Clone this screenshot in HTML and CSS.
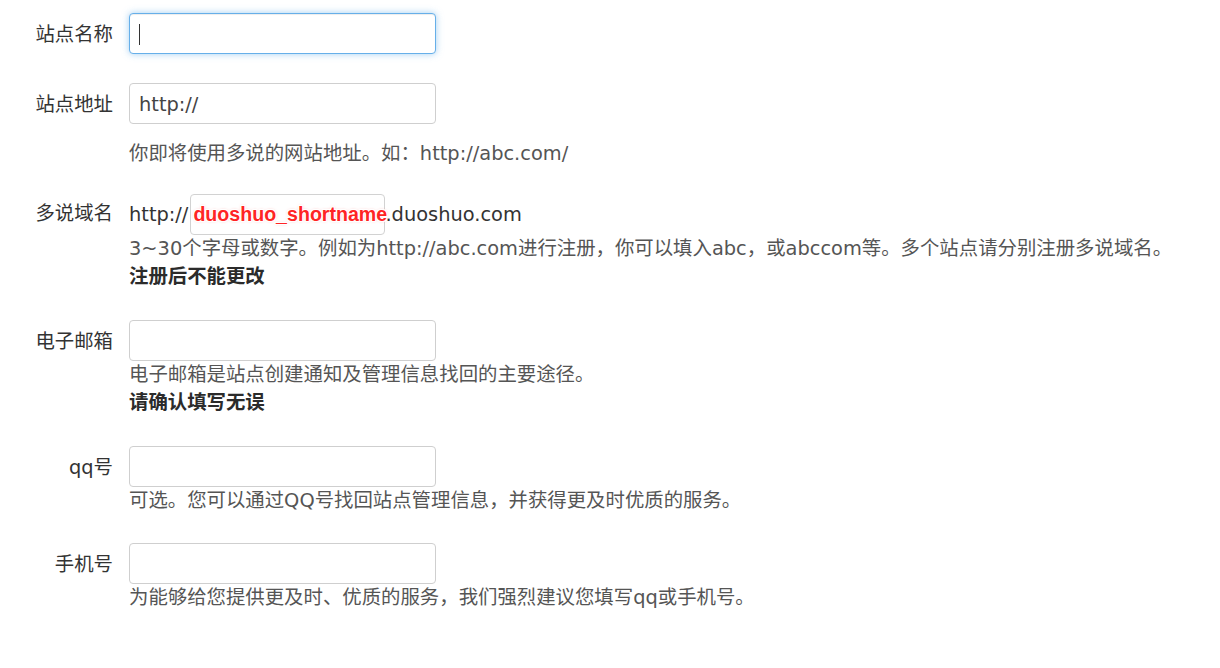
FILE: index.html
```html
<!DOCTYPE html>
<html lang="zh-CN">
<head>
<meta charset="utf-8">
<title>创建站点</title>
<link rel="stylesheet" href="styles.css">
</head>
<body>
<form class="form">
  <div class="group">
    <label class="label">站点名称</label>
    <div class="field">
      <div class="input focus"><span class="caret"></span></div>
    </div>
  </div>

  <div class="group group-url">
    <label class="label">站点地址</label>
    <div class="field">
      <div class="input">http://</div>
      <p class="help help-spaced">你即将使用多说的网站地址。如：http://abc.com/</p>
    </div>
  </div>

  <div class="group">
    <label class="label label-domain">多说域名</label>
    <div class="field">
      <div class="domain">http://<span class="short"><span class="short-text">duoshuo_shortname</span></span>.duoshuo.com</div>
      <p class="help">3~30个字母或数字。例如为http://abc.com进行注册，你可以填入abc，或abccom等。多个站点请分别注册多说域名。</p>
      <p class="help strong">注册后不能更改</p>
    </div>
  </div>

  <div class="group">
    <label class="label">电子邮箱</label>
    <div class="field">
      <div class="input"></div>
      <p class="help">电子邮箱是站点创建通知及管理信息找回的主要途径。</p>
      <p class="help strong">请确认填写无误</p>
    </div>
  </div>

  <div class="group group-qq">
    <label class="label">qq号</label>
    <div class="field">
      <div class="input"></div>
      <p class="help">可选。您可以通过QQ号找回站点管理信息，并获得更及时优质的服务。</p>
    </div>
  </div>

  <div class="group">
    <label class="label">手机号</label>
    <div class="field">
      <div class="input"></div>
      <p class="help">为能够给您提供更及时、优质的服务，我们强烈建议您填写qq或手机号。</p>
    </div>
  </div>
</form>
</body>
</html>
```

FILE: styles.css
```css
html, body {
  margin: 0;
  padding: 0;
  background: #ffffff;
}

body {
  font-family: "DejaVu Sans", "Noto Sans CJK SC", sans-serif;
  font-size: 19.4px;
  line-height: 28px;
  color: #333333;
}

.form {
  padding-top: 13px;
}

.group {
  display: flex;
  gap: 16px;
  margin-bottom: 29px;
}

.group-url {
  margin-bottom: 26px;
}

.group-qq {
  margin-bottom: 28px;
}

.label {
  width: 113px;
  flex: none;
  box-sizing: border-box;
  padding-top: 2px;
  text-align: right;
  line-height: 39px;
  color: #333333;
  white-space: nowrap;
}

.label-domain {
  padding-top: 1px;
  line-height: 38px;
}

.field {
  flex: 1;
  min-width: 0;
}

.input {
  box-sizing: border-box;
  width: 307px;
  height: 41px;
  border: 1px solid #cfcfcf;
  border-radius: 4px;
  padding: 2px 9px 0;
  line-height: 37px;
  color: #444444;
  background: #ffffff;
  position: relative;
}

.input.focus {
  border-color: #66afe9;
  box-shadow: inset 0 1px 1px rgba(0, 0, 0, 0.075), 0 0 7px rgba(102, 175, 233, 0.6);
}

.caret {
  position: absolute;
  left: 9px;
  top: 10px;
  width: 1px;
  height: 21px;
  background: #333333;
}

.help {
  margin: 0;
  color: #555555;
  white-space: nowrap;
}

.help-spaced {
  margin-top: 16px;
}

.help.strong {
  font-weight: bold;
  color: #2b2b2b;
}

.domain {
  color: #333333;
  white-space: nowrap;
}

.short {
  display: inline-block;
  box-sizing: border-box;
  width: 195px;
  height: 41px;
  margin-left: 2px;
  padding: 5px 0 0 2px;
  border: 1px solid #d2d2d2;
  border-radius: 4px;
  vertical-align: baseline;
  line-height: 28px;
  white-space: nowrap;
}

.short-text {
  font-family: "Liberation Sans", "Noto Sans CJK SC", sans-serif;
  font-size: 19.6px;
  font-weight: bold;
  color: #ff2424;
  text-shadow:
    1px 0 0 #ffffff,
    -1px 0 0 #ffffff,
    0 1px 0 #ffffff,
    0 -1px 0 #ffffff,
    1px 1px 0 #ffffff,
    -1px -1px 0 #ffffff,
    1px -1px 0 #ffffff,
    -1px 1px 0 #ffffff,
    0 0 3px rgba(255, 60, 60, 0.5);
}
```
